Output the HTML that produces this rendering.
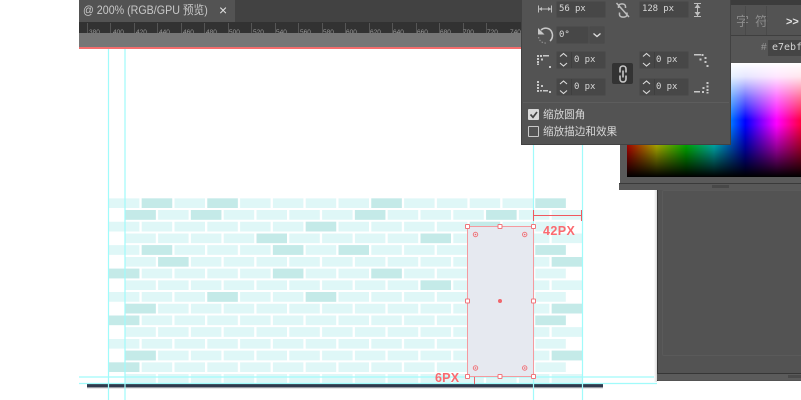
<!DOCTYPE html>
<html>
<head>
<meta charset="utf-8">
<style>
html,body{margin:0;padding:0;background:#fff;}
body{width:801px;height:400px;position:relative;overflow:hidden;font-family:"Liberation Sans","Noto Sans CJK SC",sans-serif;}
svg{position:absolute;left:0;top:0;display:block;}
.a{position:absolute;}
.inp{position:absolute;background:#474747;border:1px solid #4d4d4d;border-radius:2px;box-sizing:border-box;color:#d8d8d8;font:9px/15px "DejaVu Sans Mono",monospace;letter-spacing:-.1px;white-space:pre;}
</style>
</head>
<body>
<div class="a" style="left:79px;top:0;width:442px;height:22px;background:#424242"></div>
<div class="a" style="left:79px;top:0;width:156px;height:22px;background:#535353"></div>
<div class="a" style="left:83px;top:1px;color:#c8c8c8;font-size:12px;line-height:18px;white-space:pre;transform:scaleX(.89);transform-origin:left center">@ 200% (RGB/GPU 预览)</div>
<div class="a" style="left:219px;top:1px;color:#e0e0e0;font-size:14px;line-height:18px">×</div>
<div class="a" style="left:79px;top:22px;width:442px;height:11px;background:#323232"></div>
<div class="a" style="left:79px;top:33px;width:442px;height:14px;background:#767676"></div>
<div class="a" style="left:79px;top:47px;width:443px;height:2px;background:#f46d6d"></div>

<svg width="801" height="400" viewBox="0 0 801 400" style="font-family:'Liberation Sans',sans-serif">
<!-- ruler -->
<g stroke="#555" stroke-width="1">
<path d="M87.5 23v10M110.5 23v10M134.5 23v10M157.5 23v10M181.5 23v10M204.5 23v10M228.5 23v10M251.5 23v10M275.5 23v10M298.5 23v10M322.5 23v10M345.5 23v10M369.5 23v10M392.5 23v10M416.5 23v10M439.5 23v10M463.5 23v10M486.5 23v10"/>
</g>
<g fill="#9a9a9a" font-size="6.5">
<text x="89" y="34">380</text><text x="113" y="34">400</text><text x="136" y="34">420</text><text x="159" y="34">440</text><text x="183" y="34">460</text><text x="206" y="34">480</text><text x="229" y="34">500</text><text x="253" y="34">520</text><text x="276" y="34">540</text><text x="300" y="34">560</text><text x="323" y="34">580</text><text x="346" y="34">600</text><text x="370" y="34">620</text><text x="393" y="34">640</text><text x="417" y="34">660</text><text x="440" y="34">680</text><text x="463" y="34">700</text><text x="487" y="34">720</text><text x="510" y="34">740</text>
</g>
<rect x="79" y="33" width="442" height="14" fill="#767676"/>

<!-- light bricks -->
<g stroke="#dff7f7" stroke-width="9.7" stroke-dasharray="30.5 2.3" fill="none">
<path d="M108.9 203.2H566M108.9 226.6H566M108.9 250H566M108.9 273.5H566M108.9 296.9H566M108.9 320.3H566M108.9 343.8H566M108.9 367.2H566"/>
<path d="M125.3 214.9H582M125.3 238.3H582M125.3 261.8H582M125.3 285.2H582M125.3 308.6H582M125.3 332H582M125.3 355.5H582M125.3 378.9H582"/>
</g>
<!-- dark bricks -->
<path fill="none" stroke="#c4eae8" stroke-width="9.7" d="M141.7 203.2h30.5M207.3 203.2h30.5M371.3 203.2h30.5M535.3 203.2h30.5
M125.3 214.9h30.5M190.9 214.9h30.5M354.9 214.9h30.5M486.1 214.9h30.5
M305.7 226.6h30.5M469.7 226.6h30.5
M256.5 238.3h30.5M420.5 238.3h30.5
M141.7 250h30.5M272.9 250h30.5M338.5 250h30.5M535.3 250h30.5
M158.1 261.8h30.5M551.7 261.8h30.5
M108.9 273.5h30.5M272.9 273.5h30.5M371.3 273.5h30.5
M420.5 285.2h30.5
M207.3 296.9h30.5M305.7 296.9h30.5
M125.3 308.6h30.5M551.7 308.6h30.5
M108.9 320.3h30.5M535.3 320.3h30.5
M125.3 355.5h30.5M551.7 355.5h30.5
M108.9 367.2h30.5"/>

<!-- base bar -->
<rect x="87" y="384" width="516" height="3.4" fill="#2f3a4d"/>
<rect x="87" y="387.4" width="516" height="1" fill="#c4c4c6"/>

<!-- guides -->
<g stroke="#a0fbfb" stroke-width="1.2" fill="none">
<path d="M108.5 49V400M125 49V400M533.500 145V400M582.500 145V400"/>
<path d="M79 377H657M79 383.500H657"/>
</g>

<!-- selected rect -->
<rect x="467.5" y="226.5" width="66" height="150" fill="#e6e9f0" stroke="#f59a9f" stroke-width="1"/>
<g fill="#fff" stroke="#f0767c" stroke-width="1">
<rect x="465.500" y="224.500" width="4" height="4" rx=".5"/><rect x="498" y="224.500" width="4" height="4" rx=".5"/><rect x="531.500" y="224.500" width="4" height="4" rx=".5"/>
<rect x="465.500" y="299" width="4" height="4" rx=".5"/><rect x="531.500" y="299" width="4" height="4" rx=".5"/>
<rect x="465.500" y="374.500" width="4" height="4" rx=".5"/><rect x="498" y="374.500" width="4" height="4" rx=".5"/><rect x="531.500" y="374.500" width="4" height="4" rx=".5"/>
</g>
<g fill="none" stroke="#f0767c" stroke-width="1">
<circle cx="475.500" cy="234.500" r="2.200"/><circle cx="524.700" cy="234.500" r="2.200"/><circle cx="475.500" cy="368" r="2.200"/><circle cx="524.700" cy="368" r="2.200"/>
</g>
<g fill="#f0666c">
<circle cx="475.500" cy="234.500" r=".8"/><circle cx="524.700" cy="234.500" r=".8"/><circle cx="475.500" cy="368" r=".8"/><circle cx="524.700" cy="368" r=".8"/>
<circle cx="500" cy="301" r="2"/>
</g>

<!-- measures -->
<path d="M533.500 210v11M581.500 210v11M533.500 215.500H581.500" stroke="#f0595f" stroke-width="1" fill="none"/>
<path d="M474.500 377v7" stroke="#f0666c" stroke-width="1"/>
<text x="543" y="235" fill="#fb6a70" font-size="12.500" font-weight="bold" letter-spacing=".4">42PX</text>
<text x="435" y="382" fill="#fb6a70" font-size="12.500" font-weight="bold" letter-spacing=".2">6PX</text>
</svg>

<!-- right docks -->
<div class="a" style="left:521px;top:0;width:280px;height:6px;background:#3c3c3c"></div>
<div class="a" style="left:620px;top:5px;width:181px;height:185px;background:#5a5a5a"></div>
<div class="a" style="left:730px;top:5px;width:71px;height:31px;background:#535353"></div>
<div class="a" style="left:730px;top:35px;width:71px;height:1px;background:#3f3f3f"></div>
<div class="a" style="left:620px;top:36px;width:181px;height:27px;background:#565656"></div>
<div class="a" style="left:736px;top:13px;color:#8a8a8a;font-size:13px;line-height:18px;letter-spacing:6px;white-space:pre">字符</div>
<div class="a" style="left:745px;top:6px;width:1px;height:29px;background:#4a4a4a"></div>
<div class="a" style="left:766px;top:6px;width:1px;height:29px;background:#4a4a4a"></div>
<div class="a" style="left:786px;top:13px;color:#e2e2e2;font:bold 11px/18px 'Liberation Sans',sans-serif">&gt;&gt;</div>
<div class="a" style="left:761px;top:41px;color:#999;font:10px/14px 'Liberation Sans',sans-serif">#</div>
<div class="a" style="left:768px;top:40px;width:40px;height:16px;background:#454545;color:#d4d4d4;font:10px/16px 'DejaVu Sans Mono',monospace;padding-left:4px;box-sizing:border-box;white-space:pre">e7ebf2</div>
<div class="a" style="left:627px;top:63px;width:174px;height:114px;background:linear-gradient(to bottom,rgba(255,255,255,1) 0%,rgba(255,255,255,.9) 12%,rgba(255,255,255,.45) 30%,rgba(255,255,255,0) 50%,rgba(0,0,0,0) 54%,rgba(0,0,0,.45) 76%,rgba(0,0,0,1) 100%),linear-gradient(to right,#ff0000 0%,#ffff00 17%,#00ff00 34%,#00ffff 50%,#0000ff 68%,#ff00ff 86%,#ff0040 100%)"></div>
<div class="a" style="left:619px;top:183px;width:182px;height:1px;background:#3a3a3a"></div>
<div class="a" style="left:619px;top:184px;width:182px;height:6px;background:#585858"></div>
<div class="a" style="left:712px;top:185px;width:17px;height:3px;background:#484848"></div>

<div class="a" style="left:654px;top:190px;width:3px;height:192px;background:linear-gradient(to right,#fff,#d8d8d8)"></div>
<div class="a" style="left:657px;top:190px;width:144px;height:191px;background:#535353;border-left:1px solid #383838;box-sizing:border-box"></div>
<div class="a" style="left:662px;top:190px;width:145px;height:166px;border:1px solid #5a5a5a;border-radius:2px;box-sizing:border-box"></div>
<div class="a" style="left:657px;top:373px;width:144px;height:1px;background:#363636"></div>
<div class="a" style="left:657px;top:374px;width:144px;height:6px;background:#5b5b5b"></div>
<div class="a" style="left:788px;top:375px;width:13px;height:3px;background:#4a4a4a"></div>

<!-- floating panel -->
<div class="a" style="left:521px;top:0;width:210px;height:145px;background:#535353;border:1px solid #424242;border-top:0;box-sizing:border-box"></div>
<div class="inp" style="left:556px;top:1px;width:50px;height:17px;padding-left:2px">56 px</div>
<div class="inp" style="left:639px;top:1px;width:50px;height:17px;padding-left:2px">128 px</div>
<div class="inp" style="left:556px;top:26px;width:33px;height:18px;padding-left:2px;line-height:16px">0°</div>
<div class="inp" style="left:589px;top:26px;width:16px;height:18px;background:#4b4b4b"></div>
<div class="inp" style="left:556px;top:51px;width:50px;height:18px;padding-left:17px;line-height:16px">0 px</div>
<div class="inp" style="left:639px;top:51px;width:50px;height:18px;padding-left:16px;line-height:16px">0 px</div>
<div class="inp" style="left:556px;top:78px;width:50px;height:18px;padding-left:17px;line-height:16px">0 px</div>
<div class="inp" style="left:639px;top:78px;width:50px;height:18px;padding-left:16px;line-height:16px">0 px</div>
<div class="a" style="left:612px;top:63px;width:21px;height:21px;background:#333;border-radius:2px"></div>
<div class="a" style="left:523px;top:102px;width:206px;height:1px;background:#5d5d5d"></div>
<div class="a" style="left:528px;top:109px;width:11px;height:11px;background:#d8d8d8;border-radius:1px"></div>
<div class="a" style="left:528px;top:126px;width:11px;height:11px;border:1px solid #c8c8c8;border-radius:1px;box-sizing:border-box"></div>
<div class="a" style="left:543px;top:107px;color:#d8d8d8;font-size:10.600px;line-height:17px;white-space:pre">缩放圆角</div>
<div class="a" style="left:543px;top:124px;color:#d8d8d8;font-size:10.600px;line-height:17px;white-space:pre">缩放描边和效果</div>

<svg width="801" height="400" viewBox="0 0 801 400" style="pointer-events:none">
<!-- width icon -->
<path d="M538.500 5.500v7M551.500 5.500v7M539 9h12" stroke="#bdbdbd" stroke-width="1" fill="none"/>
<path d="M539 9l3-2v4zM551 9l-3-2v4z" fill="#bdbdbd"/>
<!-- broken link -->
<path d="M618.500 8V6.500c0-3.500 7-3.500 7 0V8M619.500 12.500v2c0 3.500 7.500 3.500 7.500 0v-2M616.500 3l12.500 14" stroke="#bdbdbd" stroke-width="1.500" fill="none"/>
<!-- height icon -->
<path d="M694 3.500h7M694 16.500h7M697.500 4v12" stroke="#bdbdbd" stroke-width="1" fill="none"/>
<path d="M697.500 4l-3 4h6zM697.500 16l-3-4h6z" fill="#bdbdbd"/>
<!-- rotate -->
<path d="M541 30c3.500-3 8.500-2.300 10.500 1.500 1.800 3.500 1 7.500-1.500 9.500" stroke="#c8c8c8" stroke-width="1.500" fill="none"/>
<path d="M538 28v6.500h6.500z" fill="#c8c8c8"/>
<path d="M538.500 37c.5 3.500 3.500 6.500 8.500 6" stroke="#8f8f8f" stroke-width="1.200" stroke-dasharray="1.500 1.500" fill="none"/>
<!-- chevron -->
<path d="M593.500 33.500l3.500 3 3.500-3" stroke="#e0e0e0" stroke-width="1.300" fill="none"/>
<!-- steppers -->
<g stroke="#dcdcdc" stroke-width="1.100" fill="none">
<path d="M560 56.500l3.500-3 3.500 3M560 63l3.500 3 3.500-3"/>
<path d="M643 56.500l3.500-3 3.500 3M643 63l3.500 3 3.500-3"/>
<path d="M560 84l3.500-3 3.500 3M560 90.500l3.500 3 3.500-3"/>
<path d="M643 84l3.500-3 3.500 3M643 90.500l3.500 3 3.500-3"/>
</g>
<g stroke="#3f3f3f" stroke-width="1"><path d="M571.500 52v16M654.500 52v16M571.500 79v16M654.500 79v16"/></g>
<!-- corner icons -->
<g fill="#c8c8c8">
<rect x="537" y="55" width="2" height="2"/><rect x="537" y="58" width="2" height="2"/><rect x="537" y="61" width="2" height="2"/><rect x="537" y="63.500" width="2" height="1.500"/>
<rect x="540" y="55" width="2" height="2"/><rect x="543" y="55" width="6" height="1.500"/><rect x="541" y="58.500" width="2" height="2"/><rect x="549" y="66" width="2" height="2"/>
<rect x="537" y="81" width="2" height="2"/><rect x="537" y="84" width="2" height="2"/><rect x="537" y="87" width="2" height="2"/><rect x="537" y="90" width="2" height="2"/>
<rect x="541" y="85" width="2" height="2"/><rect x="540" y="90" width="2" height="1.500"/><rect x="543" y="90" width="5" height="1.500"/><rect x="549" y="91" width="2" height="2"/>
<rect x="694" y="54" width="7" height="1.500"/><rect x="701.500" y="54" width="2" height="2"/><rect x="699.500" y="58.500" width="2" height="2"/><rect x="704.500" y="57" width="2" height="2"/><rect x="704.500" y="61" width="2" height="2"/><rect x="706.500" y="65" width="2" height="2"/>
<rect x="694" y="91" width="6" height="1.500"/><rect x="702" y="91" width="2" height="2"/><rect x="702.500" y="87" width="2" height="2"/><rect x="706.500" y="82" width="2" height="2"/><rect x="706.500" y="85.500" width="2" height="2"/><rect x="706.500" y="89" width="2" height="2"/><rect x="706.500" y="92" width="2" height="1.500"/>
</g>
<!-- chain -->
<path d="M620 72.500V69c0-4 6-4 6 0v3.500M620 75.500V79c0 4 6 4 6 0v-3.500M623 70.500v7" stroke="#c8c8c8" stroke-width="1.600" fill="none"/>
<!-- check -->
<path d="M530.500 114.500l2.500 2.800 4-5.300" stroke="#444" stroke-width="1.700" fill="none"/>
</svg>
</body>
</html>
